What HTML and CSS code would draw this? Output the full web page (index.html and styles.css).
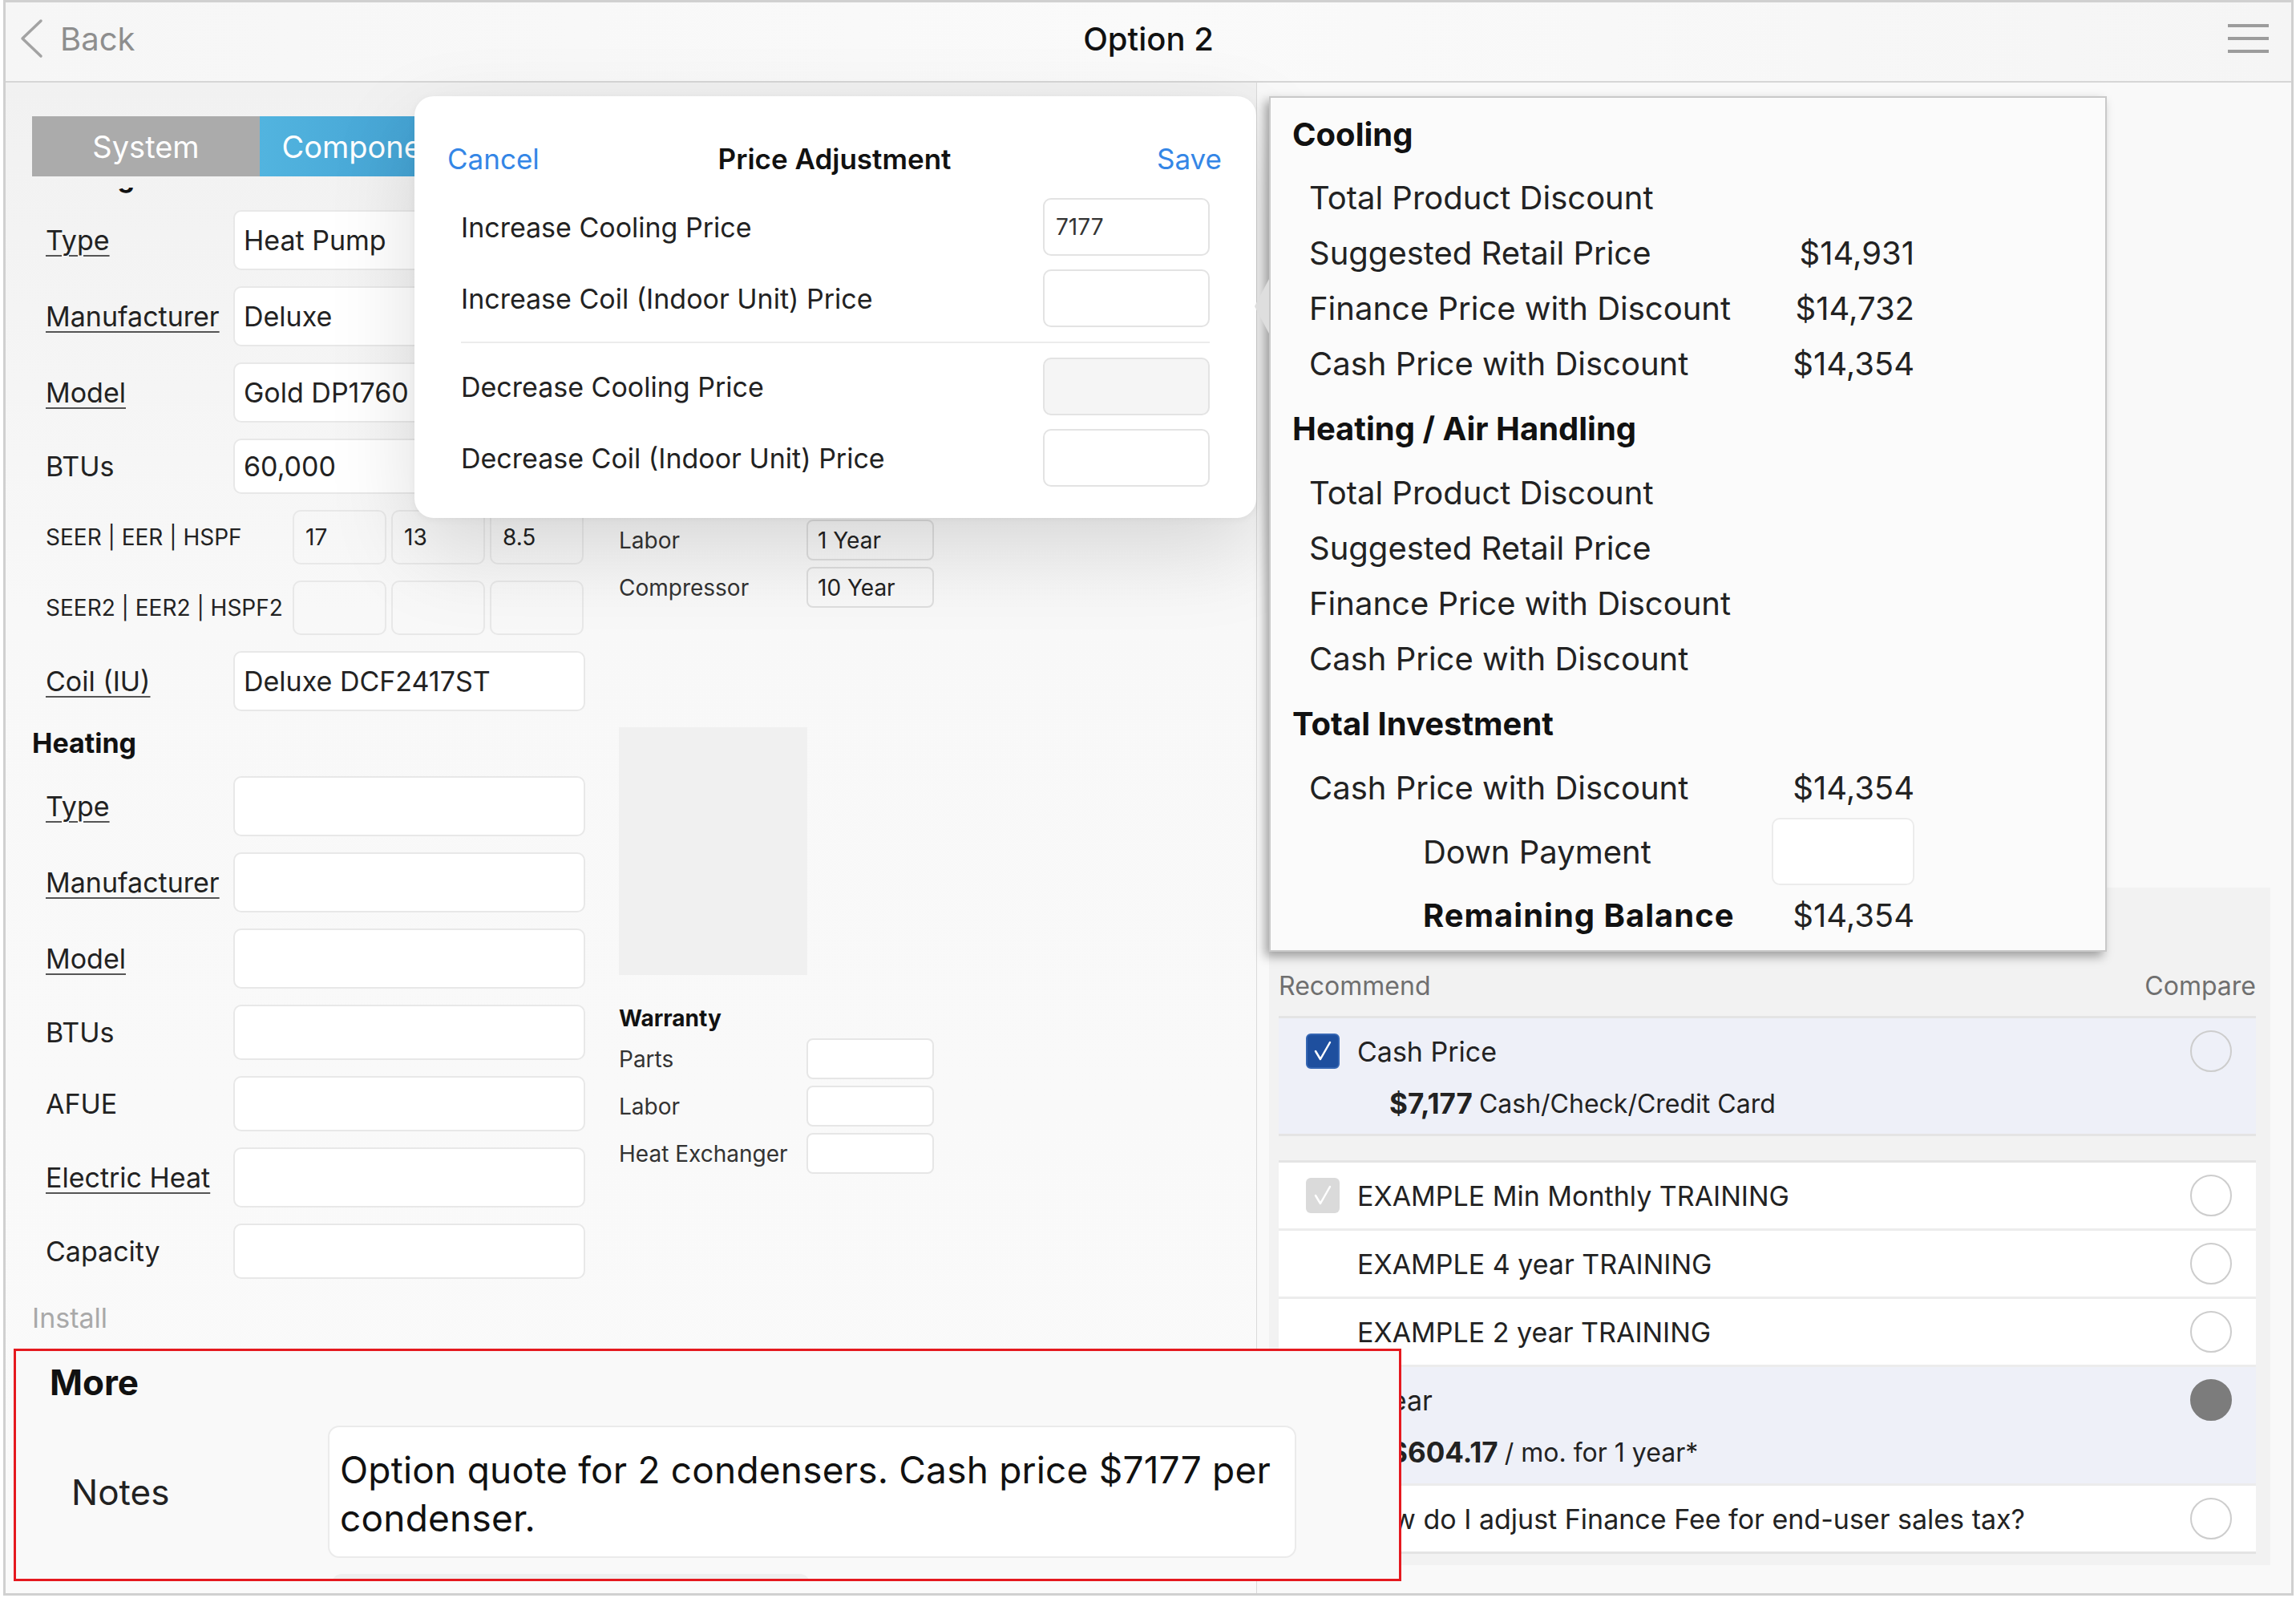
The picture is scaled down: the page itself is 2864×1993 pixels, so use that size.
FILE: index.html
```html
<!DOCTYPE html>
<html>
<head>
<meta charset="utf-8">
<title>Option 2</title>
<link rel="stylesheet" href="styles.css">
</head>
<body>
<div class="screen">
  <header class="nav">
    <div class="back">
      <svg class="chev" width="36" height="50" viewBox="0 0 36 50"><path d="M31 3 L8 25 L31 47"/></svg>
      <span>Back</span>
    </div>
    <div class="title">Option 2</div>
    <div class="burger"><i></i><i></i><i></i></div>
  </header>

  <div class="main">
    <section class="left">
      <div class="tabs">
        <div class="tab sys">System</div>
        <div class="tab comp">Components</div>
      </div>
      <div class="scroll">
        <div class="scroll-inner">
          <div class="sect">
            <div class="fcol">
              <div class="sec-title">Cooling</div>
              <div class="row"><span class="lbl u">Type</span><div class="inp">Heat Pump</div></div>
              <div class="row"><span class="lbl u">Manufacturer</span><div class="inp">Deluxe</div></div>
              <div class="row"><span class="lbl u">Model</span><div class="inp">Gold DP1760</div></div>
              <div class="row"><span class="lbl">BTUs</span><div class="inp short">60,000</div></div>
              <div class="row triple"><span class="lbl">SEER | EER | HSPF</span><div class="trio"><div class="inp">17</div><div class="inp">13</div><div class="inp">8.5</div></div></div>
              <div class="row triple"><span class="lbl">SEER2 | EER2 | HSPF2</span><div class="trio"><div class="inp"></div><div class="inp"></div><div class="inp"></div></div></div>
              <div class="row"><span class="lbl u">Coil (IU)</span><div class="inp">Deluxe DCF2417ST</div></div>
            </div>
            <div class="scol">
              <div class="ph"></div>
              <div class="w-spacer"></div>
              <div class="wrow"><span>Labor</span><div class="winp">1 Year</div></div>
              <div class="wrow"><span>Compressor</span><div class="winp">10 Year</div></div>
            </div>
          </div>

          <div class="sect">
            <div class="fcol">
              <div class="sec-title">Heating</div>
              <div class="row"><span class="lbl u">Type</span><div class="inp"></div></div>
              <div class="row"><span class="lbl u">Manufacturer</span><div class="inp"></div></div>
              <div class="row"><span class="lbl u">Model</span><div class="inp"></div></div>
              <div class="row"><span class="lbl">BTUs</span><div class="inp short"></div></div>
              <div class="row"><span class="lbl">AFUE</span><div class="inp short"></div></div>
              <div class="row"><span class="lbl u">Electric Heat</span><div class="inp"></div></div>
              <div class="row"><span class="lbl">Capacity</span><div class="inp short"></div></div>
            </div>
            <div class="scol">
              <div class="ph"></div>
              <div class="w-title">Warranty</div>
              <div class="wrow"><span>Parts</span><div class="winp light"></div></div>
              <div class="wrow"><span>Labor</span><div class="winp light"></div></div>
              <div class="wrow"><span>Heat Exchanger</span><div class="winp light"></div></div>
            </div>
          </div>
          <div class="install">Install</div>
        </div>
      </div>
    </section>

    <section class="right">
      <div class="list">
        <div class="list-head"><span>Recommend</span><span>Compare</span></div>
        <div class="group">
          <div class="opt sel">
            <div class="opt-main">
              <span class="cb on"><svg viewBox="0 0 42 44" width="42" height="44"><path d="M12 22 L18 32 L30 11"/></svg></span>
              <span class="opt-name">Cash Price</span>
              <span class="radio"></span>
            </div>
            <div class="opt-sub"><b>$7,177</b> Cash/Check/Credit Card</div>
          </div>
        </div>
        <div class="group g2">
          <div class="opt">
            <div class="opt-main">
              <span class="cb off"><svg viewBox="0 0 42 44" width="42" height="44"><path d="M12 22 L18 32 L30 11"/></svg></span>
              <span class="opt-name">EXAMPLE Min Monthly TRAINING</span>
              <span class="radio"></span>
            </div>
          </div>
          <div class="opt">
            <div class="opt-main"><span class="cb none"></span><span class="opt-name">EXAMPLE 4 year TRAINING</span><span class="radio"></span></div>
          </div>
          <div class="opt">
            <div class="opt-main"><span class="cb none"></span><span class="opt-name">EXAMPLE 2 year TRAINING</span><span class="radio"></span></div>
          </div>
          <div class="opt sel">
            <div class="opt-main"><span class="cb none"></span><span class="opt-name">1 year</span><span class="radio filled"></span></div>
            <div class="opt-sub"><b>$604.17</b> / mo. for 1 year*</div>
          </div>
          <div class="opt">
            <div class="opt-main"><span class="cb none"></span><span class="opt-name">How do I adjust Finance Fee for end-user sales tax?</span><span class="radio"></span></div>
          </div>
        </div>
      </div>
    </section>
  </div>

  <div class="popup">
    <div class="pa-head">
      <span class="link">Cancel</span>
      <span class="pa-title">Price Adjustment</span>
      <span class="link save">Save</span>
    </div>
    <div class="pa-row"><span>Increase Cooling Price</span><div class="pa-inp">7177</div></div>
    <div class="pa-row"><span>Increase Coil (Indoor Unit) Price</span><div class="pa-inp"></div></div>
    <div class="pa-div"></div>
    <div class="pa-row"><span>Decrease Cooling Price</span><div class="pa-inp dis"></div></div>
    <div class="pa-row"><span>Decrease Coil (Indoor Unit) Price</span><div class="pa-inp"></div></div>
  </div>

  <div class="summary">
    <div class="sum-h first">Cooling</div>
    <div class="sum-r"><span>Total Product Discount</span><span></span></div>
    <div class="sum-r"><span>Suggested Retail Price</span><span>$14,931</span></div>
    <div class="sum-r"><span>Finance Price with Discount</span><span>$14,732</span></div>
    <div class="sum-r"><span>Cash Price with Discount</span><span>$14,354</span></div>
    <div class="sum-h">Heating / Air Handling</div>
    <div class="sum-r"><span>Total Product Discount</span><span></span></div>
    <div class="sum-r"><span>Suggested Retail Price</span><span></span></div>
    <div class="sum-r"><span>Finance Price with Discount</span><span></span></div>
    <div class="sum-r"><span>Cash Price with Discount</span><span></span></div>
    <div class="sum-h">Total Investment</div>
    <div class="sum-r"><span>Cash Price with Discount</span><span>$14,354</span></div>
    <div class="sum-r dp"><span class="ind">Down Payment</span><div class="dp-inp"></div></div>
    <div class="sum-r"><span class="ind strong">Remaining Balance</span><span>$14,354</span></div>
  </div>

  <div class="more">
    <div class="more-title">More</div>
    <div class="notes-row">
      <span class="notes-lbl">Notes</span>
      <div class="notes-box">Option quote for 2 condensers. Cash price $7177 per condenser.</div>
    </div>
    <div class="next-box"></div>
  </div>
</div>
</body>
</html>
```

FILE: styles.css
```css
* { box-sizing: border-box; }
html, body { margin: 0; padding: 0; }
body {
  width: 2864px;
  height: 1993px;
  overflow: hidden;
  background: #ffffff;
  font-family: Inter, "Noto Sans", "Liberation Sans", sans-serif;
  color: #222;
}
.screen {
  position: relative;
  margin-left: 4px;
  width: 2857px;
  height: 1990px;
  border: 3px solid #d0d0d0;
  background: #f8f8f8;
  overflow: hidden;
  display: flex;
  flex-direction: column;
}

/* nav */
.nav {
  flex: none;
  height: 100px;
  border-bottom: 2px solid #d6d6d6;
  background: linear-gradient(90deg, #f6f6f6, #fafafa 50%, #f5f5f5);
  display: grid;
  grid-template-columns: 1fr auto 1fr;
  align-items: center;
  padding-bottom: 8px;
}
.back { display: flex; align-items: center; padding-left: 13px; color: #8e8e8e; font-size: 40px; }
.chev path { fill: none; stroke: #a3a3a3; stroke-width: 3.5; stroke-linecap: round; stroke-linejoin: round; }
.back span { margin-left: 19px; }
.title { font-size: 40px; font-weight: 500; color: #111; }
.burger { justify-self: end; margin-right: 28px; display: flex; flex-direction: column; gap: 12px; }
.burger i { display: block; width: 51px; height: 4px; background: #9c9c9c; }

/* main */
.main { flex: 1; display: flex; min-height: 0; }
.left {
  width: 1561px;
  flex: none;
  border-right: 1px solid #dadada;
  background: linear-gradient(180deg, #f1f1f1 0%, #f8f8f8 35%, #fafafa 100%);
  display: flex;
  flex-direction: column;
  overflow: hidden;
}
.tabs { display: flex; margin: 42px 0 0 33px; height: 75px; flex: none; }
.tab { width: 284px; display: flex; align-items: center; justify-content: center; color: #fff; font-size: 38px; }
.tab.sys { background: #ababab; }
.tab.comp { background: linear-gradient(90deg, #52b4df, #3f9ccf); }

.scroll { margin-top: 14px; flex: 1; overflow: hidden; }
.scroll-inner { margin-top: -33px; padding-left: 33px; }

.sect { display: grid; grid-template-columns: 690px 393px; column-gap: 42px; align-items: start; }
.sec-title { height: 61px; line-height: 40px; font-size: 34px; font-weight: 700; color: #111; }
.row { display: flex; align-items: center; margin-left: 17px; margin-bottom: 20px; }
.lbl { width: 234px; font-size: 34px; color: #222; white-space: nowrap; }
.lbl.u { text-decoration: underline; text-decoration-thickness: 2px; text-underline-offset: 6px; text-decoration-color: #555; }
.inp {
  width: 439px;
  height: 75px;
  background: #fff;
  border: 2px solid #e8e8e8;
  border-radius: 10px;
  display: flex;
  align-items: center;
  padding-left: 11px;
  font-size: 34px;
  color: #222;
}
.inp.short { height: 69px; }
.row.triple .lbl { width: 308px; font-size: 28px; }
.trio { display: flex; gap: 6px; }
.trio .inp { width: 117px; height: 68px; font-size: 28px; padding-left: 14px; background: transparent; }

.ph { width: 235px; height: 309px; background: #f0f0f0; }
.w-spacer { height: 138px; }
.w-title { margin-top: 36px; height: 36px; line-height: 36px; margin-bottom: 7px; font-size: 28px; font-weight: 700; color: #111; }
.wrow { display: flex; align-items: center; height: 51px; margin-bottom: 8px; }
.wrow span { width: 234px; font-size: 28px; color: #333; }
.winp {
  width: 159px;
  height: 51px;
  border: 2px solid #dedede;
  border-radius: 8px;
  display: flex;
  align-items: center;
  padding-left: 12px;
  font-size: 28px;
  color: #222;
}
.winp.light { background: #fff; border-color: #e6e6e6; }
.install { margin-top: 9px; line-height: 40px; font-size: 34px; color: #a9a9a9; }

/* right */
.right { flex: 1; background: #f9f9f9; padding: 1004px 26px 0 15px; }
.list { background: #f2f2f2; padding: 0 18px 14px 12px; }
.list-head {
  height: 160px;
  display: flex;
  justify-content: space-between;
  align-items: flex-end;
  padding-bottom: 10px;
  line-height: 54px;
  font-size: 32px;
  color: #6f6f6f;
}
.group { background: #fff; border-top: 3px solid #e4e4e4; border-bottom: 3px solid #e4e4e4; }
.group.g2 { margin-top: 30px; }
.opt + .opt { border-top: 3px solid #ececec; }
.opt.sel { background: #eef0f8; min-height: 144px; }
.group.g2 .opt.sel { min-height: 148px; }
.opt-main { height: 82px; display: flex; align-items: center; padding-left: 34px; }
.cb { width: 42px; height: 44px; border-radius: 6px; flex: none; display: flex; }
.cb svg path { fill: none; stroke: #fff; stroke-width: 2.5; stroke-linecap: round; stroke-linejoin: round; }
.cb.on { background: #1e4f9e; border: 2px solid #3566b3; }
.cb.on svg { margin: -2px; }
.cb.off { background: #dadada; }
.opt-name { margin-left: 22px; font-size: 34px; color: #222; white-space: nowrap; }
.radio {
  margin-left: auto;
  margin-right: 30px;
  width: 52px;
  height: 52px;
  border-radius: 50%;
  border: 2px solid #cdcdcd;
  flex: none;
}
.radio.filled { background: #7c7c7c; border-color: #7c7c7c; }
.opt-sub { height: 48px; display: flex; align-items: center; padding-left: 138px; font-size: 32px; color: #222; }
.opt-sub b { font-size: 35px; font-weight: 700; margin-right: 8px; }

/* price adjustment popup */
.popup {
  position: absolute;
  left: 510px;
  top: 117px;
  width: 1050px;
  height: 526px;
  background: #fff;
  border-radius: 24px;
  box-shadow: 0 40px 110px rgba(0, 0, 0, 0.13), 0 2px 10px rgba(0, 0, 0, 0.05);
  padding: 57px 58px 0 58px;
  z-index: 3;
}
.pa-head {
  display: grid;
  grid-template-columns: 1fr auto 1fr;
  align-items: center;
  height: 40px;
  margin: 0 -15px 30px -17px;
  font-size: 35px;
}
.link { color: #3486e6; }
.link.save { justify-self: end; }
.pa-title { font-weight: 600; color: #111; }
.pa-row { display: flex; justify-content: space-between; align-items: center; height: 72px; margin-bottom: 17px; font-size: 34px; color: #222; }
.pa-row:nth-of-type(3) { margin-bottom: 0; }
.pa-inp {
  width: 208px;
  height: 72px;
  border: 2px solid #e3e3e3;
  border-radius: 10px;
  display: flex;
  align-items: center;
  padding-left: 14px;
  font-size: 28px;
  color: #333;
}
.pa-inp.dis { background: #f5f5f5; }
.pa-div { height: 2px; background: #ececec; margin: 18px 0; }

/* summary popover */
.summary {
  position: absolute;
  left: 1576px;
  top: 117px;
  width: 1045px;
  height: 1067px;
  background: #fbfbfb;
  border: 2px solid #c9c9c9;
  box-shadow: -5px 6px 12px rgba(0, 0, 0, 0.35);
  padding: 0 238px 0 27px;
  z-index: 4;
}
.summary::before {
  content: "";
  position: absolute;
  left: -20px;
  top: 226px;
  border-top: 34px solid transparent;
  border-bottom: 34px solid transparent;
  border-right: 18px solid #dedede;
}
.sum-h { height: 92px; display: flex; align-items: center; font-size: 40px; font-weight: 700; color: #111; }
.sum-h.first { height: 90px; }
.sum-r { height: 69px; display: flex; align-items: center; justify-content: space-between; padding-left: 21px; font-size: 40px; color: #222; }
.sum-r.dp { height: 90px; }
.ind { padding-left: 142px; }
.strong { font-weight: 700; color: #111; letter-spacing: 1px; }
.dp-inp { width: 178px; height: 84px; background: #fff; border: 2px solid #ececec; border-radius: 10px; }

/* More annotation */
.more {
  position: absolute;
  left: 10px;
  top: 1679px;
  width: 1731px;
  height: 290px;
  border: 3px solid #e5191f;
  background: #f9f9f9;
  padding: 14px 0 0 42px;
  overflow: hidden;
  z-index: 5;
}
.more-title { font-size: 44px; font-weight: 700; line-height: 50px; color: #111; }
.notes-row { display: flex; align-items: center; margin-top: 29px; }
.notes-lbl { width: 347px; padding-left: 27px; font-size: 44px; color: #222; }
.notes-box {
  width: 1208px;
  height: 165px;
  background: #fff;
  border: 2px solid #ebebeb;
  border-radius: 14px;
  padding: 23px 12px 0 13px;
  font-size: 46px;
  line-height: 60px;
  color: #111;
  letter-spacing: 0.2px;
}
.next-box { margin: 20px 0 0 352px; width: 596px; height: 60px; background: #efefef; border-radius: 12px; }
```
